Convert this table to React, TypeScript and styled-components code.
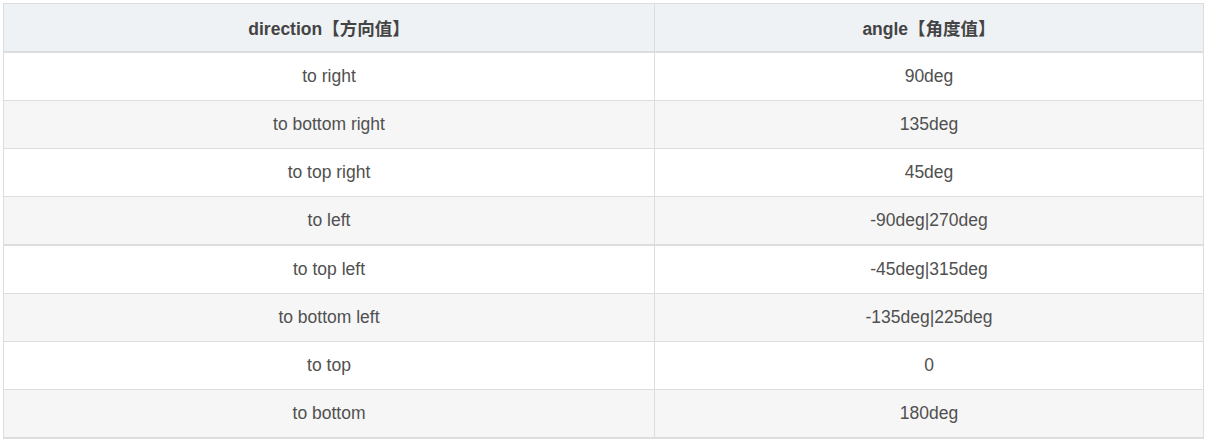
import React from 'react';
import styled, { createGlobalStyle } from 'styled-components';

const GlobalStyle = createGlobalStyle`
    body {
        margin: 0;
        padding: 3px;
        background: #fff;
        font-family: "Liberation Sans", Arial, "Noto Sans CJK SC", sans-serif;
    }
`;

const Table = styled.div`
    width: 1201px;
    border: 1px solid #dddddd;
    border-bottom-width: 2px;
    box-sizing: border-box;
`;

const Row = styled.div<{ $striped?: boolean; $thick?: boolean }>`
    display: grid;
    grid-template-columns: 650px 1fr;
    height: 47px;
    background: ${(p) => (p.$striped ? '#f6f6f6' : '#ffffff')};
    border-bottom: ${(p) => (p.$thick ? '2px' : '1px')} solid #dddddd;

    &:last-child {
        border-bottom: none;
    }
`;

const HeadRow = styled(Row)`
    background: #eff2f5;
    border-bottom: 2px solid #dddddd;
`;

const Cell = styled.div<{ $head?: boolean }>`
    display: flex;
    align-items: center;
    justify-content: center;
    font-size: 17.5px;
    font-weight: ${(p) => (p.$head ? 700 : 400)};
    color: ${(p) => (p.$head ? '#444444' : '#505050')};

    & + & {
        border-left: 1px solid #dddddd;
    }
`;

const rows: [string, string][] = [
    ['to right', '90deg'],
    ['to bottom right', '135deg'],
    ['to top right', '45deg'],
    ['to left', '-90deg|270deg'],
    ['to top left', '-45deg|315deg'],
    ['to bottom left', '-135deg|225deg'],
    ['to top', '0'],
    ['to bottom', '180deg'],
];

const App: React.FC = () => {
    return (
        <>
            <GlobalStyle />
            <Table>
                <HeadRow>
                    <Cell $head>direction【方向值】</Cell>
                    <Cell $head>angle【角度值】</Cell>
                </HeadRow>
                {rows.map(([dir, angle], i) => (
                    <Row key={dir} $striped={i % 2 === 1} $thick={i === 3}>
                        <Cell>{dir}</Cell>
                        <Cell>{angle}</Cell>
                    </Row>
                ))}
            </Table>
        </>
    );
};

export default App;
